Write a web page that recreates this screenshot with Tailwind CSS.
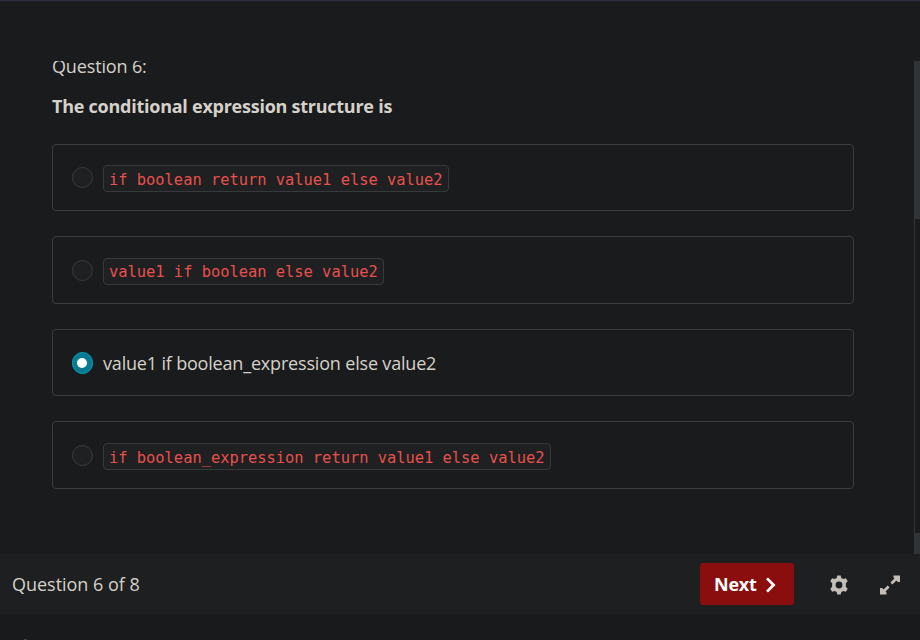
<!DOCTYPE html>
<html lang="en">
<head>
<meta charset="utf-8">
<title>Quiz</title>
<script src="https://cdn.jsdelivr.net/npm/@tailwindcss/browser@4"></script>
</head>
<body class="flex h-[640px] w-[920px] flex-col overflow-hidden bg-[#1a1b1c] font-['Open_Sans','Noto_Sans',sans-serif] text-[18px] text-[#d5d1ca]">
<header class="h-[61px] shrink-0 border-t border-[#2b303d]"></header>
<main class="flex h-[493px] shrink-0 overflow-hidden">
  <section class="flex w-[854px] shrink-0 flex-col pl-[52px]">
    <p class="-mt-[8px] h-[27px] text-[18px] leading-[27px] tracking-[-0.14px] whitespace-nowrap">Question 6:</p>
    <h1 class="mt-[13px] h-[27px] text-[18px] font-bold leading-[27px] tracking-[-0.25px] whitespace-nowrap">The conditional expression structure is</h1>
    <div class="mt-[24px] flex flex-col gap-[25px]">
      <label class="flex h-[67px] items-center rounded-[4px] border border-[#3a3d3f] pl-[19px]">
        <span class="size-[21px] rounded-full border border-[#3a3d3f] bg-[#1e2021]"></span>
        <code class="ml-[10px] mt-[2px] h-[27px] rounded-[4px] border border-[#373a3c] bg-[#1e2021] px-[5px] font-['DejaVu_Sans_Mono',monospace] text-[15.4px] leading-[28px] whitespace-nowrap text-[#e8504d]">if boolean return value1 else value2</code>
      </label>
      <label class="flex h-[68px] items-center rounded-[4px] border border-[#3a3d3f] pl-[19px]">
        <span class="mt-px size-[21px] rounded-full border border-[#3a3d3f] bg-[#1e2021]"></span>
        <code class="ml-[10px] mt-[3px] h-[27px] rounded-[4px] border border-[#373a3c] bg-[#1e2021] px-[5px] font-['DejaVu_Sans_Mono',monospace] text-[15.4px] leading-[26px] whitespace-nowrap text-[#e8504d]">value1 if boolean else value2</code>
      </label>
      <label class="flex h-[67px] items-center rounded-[4px] border border-[#3a3d3f] pl-[19px]">
        <span class="mt-px flex h-[22px] w-[21px] items-center justify-center rounded-full border border-[#04a2c2] bg-[#087990] pr-px"><span class="size-[10px] rounded-full bg-white"></span></span>
        <span class="ml-[10px] mt-[2px] text-[18px] leading-[27px] tracking-[-0.18px] whitespace-nowrap">value1 if boolean_expression else value2</span>
      </label>
      <label class="flex h-[68px] items-center rounded-[4px] border border-[#3a3d3f] pl-[19px]">
        <span class="mt-px size-[21px] rounded-full border border-[#3a3d3f] bg-[#1e2021]"></span>
        <code class="ml-[10px] mt-[3px] h-[27px] rounded-[4px] border border-[#373a3c] bg-[#1e2021] px-[5px] font-['DejaVu_Sans_Mono',monospace] text-[15.4px] leading-[28px] whitespace-nowrap text-[#e8504d]">if boolean_expression return value1 else value2</code>
      </label>
    </div>
  </section>
  <div class="ml-auto flex w-[6px] flex-col justify-between border-l border-[#303437]">
    <div class="h-[158px] bg-[#303437]"></div>
    <div class="h-[21px] bg-[#303437]"></div>
  </div>
</main>
<footer class="flex h-[60px] shrink-0 items-center bg-[#1e1f20] pl-[12px] pr-[20px]">
  <span class="text-[18px] tracking-[-0.02px] whitespace-nowrap">Question 6 of 8</span>
  <button class="ml-auto flex h-[42px] w-[94px] items-center rounded-[3px] bg-[#8b0e0e] pl-[14px] text-left text-[18px] font-bold tracking-[-0.2px] text-white">
    <span class="w-[51px] shrink-0 whitespace-nowrap">Next</span>
    <svg class="mt-[2px] h-[16px] w-[11px] shrink-0" viewBox="0 0 11 16" fill="none" stroke="currentColor" stroke-width="2.7"><path d="M2 1.4 8.6 8 2 14.6"/></svg>
  </button>
  <svg class="ml-[35px] mt-px size-[20px]" viewBox="0 0 20 20" fill="#c3bfb8"><path fill-rule="evenodd" d="M8.3.5h3.4l.6 2.5q1.1.4 2 1l2.6-.8 1.8 3.1-1.9 1.9q.2 1.8 0 3.6l1.9 1.9-1.8 3.1-2.6-.8q-.9.6-2 1l-.6 2.5H8.3L7.7 17q-1.1-.4-2-1l-2.6.8-1.8-3.1 1.9-1.9q-.2-1.8 0-3.6L1.3 6.3l1.8-3.1 2.6.8q.9-.6 2-1ZM10 6.6a3.4 3.4 0 1 0 0 6.8 3.4 3.4 0 0 0 0-6.8Z"/></svg>
  <svg class="ml-[31px] mt-px h-[20px] w-[20px]" viewBox="0 0 20 20" fill="#c3bfb8" stroke="#c3bfb8" stroke-width="2.8"><path fill="none" d="M11.4 8.6 18 2M8.6 11.4 2 18"/><path stroke="none" d="M13.5.4H20v6.5h-2.1L13.5 2.6ZM0 13.1h2.1l4.4 4.3v2.2H0Z"/></svg>
</footer>
<div class="flex h-[26px] items-end bg-[#191a1b] pl-[24px]"><span class="h-px w-[3px] bg-[#2b4a4c]"></span></div>
</body>
</html>
